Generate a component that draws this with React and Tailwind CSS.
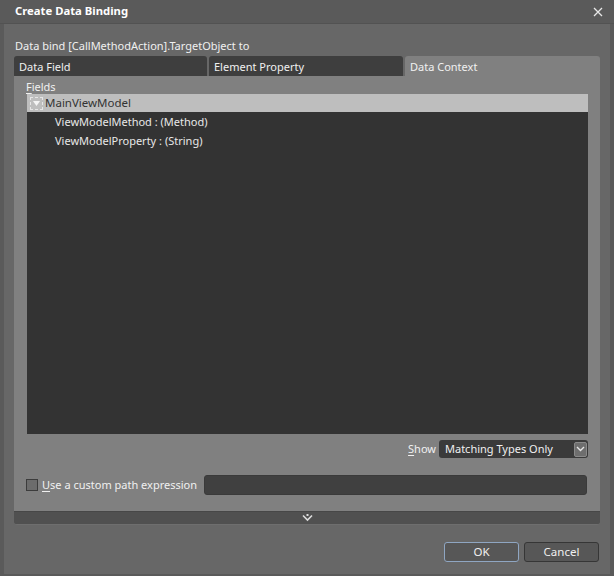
import React from 'react';

const font = { fontFamily: '"Segoe UI", "Noto Sans", "Open Sans", sans-serif' };

const ChevronDown = () => (
  <svg width="9" height="6" viewBox="0 0 9 6" fill="none">
    <path d="M1 1 L4.5 4.5 L8 1" stroke="#e6e6e6" strokeWidth="1.4" />
  </svg>
);

const App = () => {
  return (
    <div className="w-[614px] h-[576px] bg-[#5a5a5a] flex flex-col text-[11px] text-[#f0f0f0]" style={font}>
      {/* title bar */}
      <div className="h-[24px] flex items-center justify-between pl-[15px] pr-[11px] border-b border-[#525252]">
        <span className="font-bold text-[11.3px] text-white">Create Data Binding</span>
        <svg width="10" height="10" viewBox="0 0 10 10">
          <path d="M1 1 L9 9 M9 1 L1 9" stroke="#e8e8e8" strokeWidth="1.3" />
        </svg>
      </div>

      <div className="flex-1 mx-[4px] mb-[2px] bg-[#676767] flex flex-col px-[10px]">
        <div className="h-[31px] flex items-end pb-[1px] pl-[1px]">Data bind [CallMethodAction].TargetObject to</div>

        {/* tabs */}
        <div className="flex h-[20px] mt-[1px] gap-[2px]">
          <div className="w-[193px] bg-[#3e3e3e] rounded-t-[3px] flex items-center px-[5px] pt-[2px]">Data Field</div>
          <div className="w-[194px] bg-[#3e3e3e] rounded-t-[3px] flex items-center px-[5px] pt-[2px]">Element Property</div>
          <div className="flex-1 bg-[#808080] rounded-t-[3px] flex items-center px-[5px] pt-[2px]">Data Context</div>
        </div>

        {/* panel */}
        <div className="bg-[#808080] flex flex-col px-[12px] h-[435px]">
          <div className="h-[18px] pt-[4px] leading-[13px]">
            <span className="underline underline-offset-2">F</span>ields
          </div>
          <div className="ml-[1px] h-[340px] bg-[#333333] flex flex-col">
            <div className="h-[18px] bg-[#bebebe] flex items-center text-[#333333] text-[11.5px]">
              <div className="w-[13px] h-[13px] ml-[3px] mr-[2px] border border-dashed border-[#e6e6e6] flex items-center justify-center">
                <svg width="7" height="5" viewBox="0 0 7 5">
                  <path d="M0 0 H7 L3.5 5 Z" fill="#f4f4f4" />
                </svg>
              </div>
              MainViewModel
            </div>
            <div className="pl-[28px] pt-[1px] text-[#e8e8e8] flex flex-col">
              <div className="h-[19px] flex items-center">ViewModelMethod : (Method)</div>
              <div className="h-[19px] flex items-center">ViewModelProperty : (String)</div>
            </div>
          </div>

          <div className="flex items-center justify-end mt-[6px] h-[18px]">
            <span className="mr-[3px]">
              <span className="underline underline-offset-2">S</span>how
            </span>
            <div className="w-[149px] h-[18px] bg-[#3a3a3a] rounded-[3px] flex items-center justify-between pl-[6px] pr-[1px]">
              <span>Matching Types Only</span>
              <div className="w-[13px] h-[15px] bg-[#6e6e6e] rounded-[2px] border border-[#8a8a8a] flex items-center justify-center">
                <ChevronDown />
              </div>
            </div>
          </div>

          <div className="flex items-center mt-[17px] h-[20px]">
            <div className="w-[12px] h-[12px] border border-[#3c3c3c] bg-[#6c6c6c] mr-[4px]" />
            <span>
              <span className="underline underline-offset-2">U</span>se a custom path expression
            </span>
            <div className="ml-[7px] flex-1 h-[20px] bg-[#404040] rounded-[3px] border border-[#3a3a3a] mr-[1px]" />
          </div>
        </div>

        {/* collapse bar */}
        <div className="h-[14px] bg-[#505050] border-t border-[#474747] rounded-b-[3px] border-b border-b-[#6e6e6e] flex items-center justify-center">
          <svg width="11" height="8" viewBox="0 0 11 8">
            <path d="M1 1.5 L5.5 6 L10 1.5" stroke="#dcdcdc" strokeWidth="1.6" fill="none" />
            <rect x="4.5" y="0" width="2" height="2" fill="#dcdcdc" />
          </svg>
        </div>

        {/* buttons */}
        <div className="flex justify-end gap-[5px] mt-[17px] pr-[1px]">
          <button className="w-[75px] h-[20px] bg-[#575757] border border-[#8fa6c2] rounded-[3px] text-[#f0f0f0] text-[11.5px] flex items-center justify-center" style={font}>OK</button>
          <button className="w-[75px] h-[20px] bg-[#575757] border border-[#363636] rounded-[3px] text-[#f0f0f0] text-[11.5px] flex items-center justify-center" style={font}>Cancel</button>
        </div>
      </div>
    </div>
  );
};

export default App;
